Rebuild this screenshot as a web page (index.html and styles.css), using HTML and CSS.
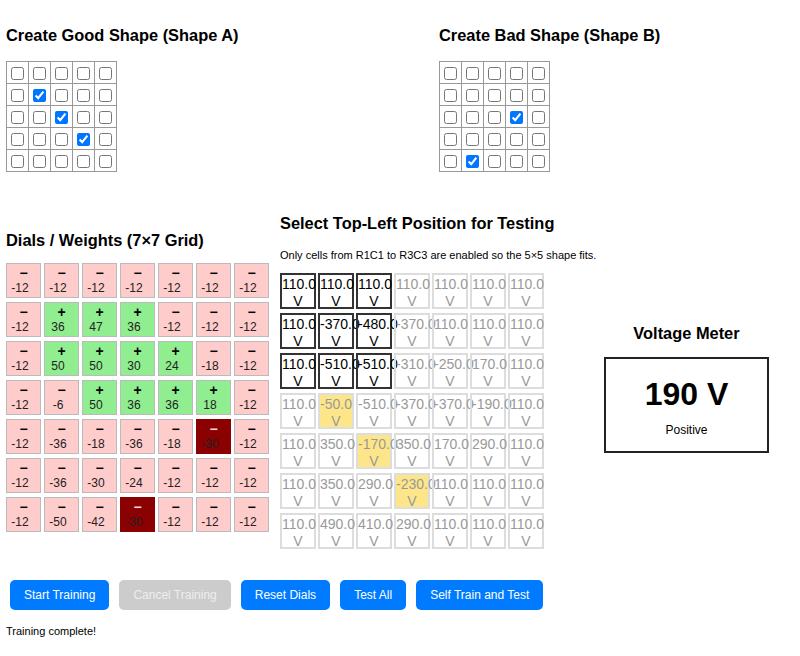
FILE: index.html
```html
<!DOCTYPE html>
<html lang="en">
<head>
  <meta charset="UTF-8">
  <title>Shape Trainer</title>
  <meta name="viewport" content="width=device-width, initial-scale=1.0">
  <link rel="stylesheet" href="styles.css">
</head>
<body>

  <!-- Shapes to learn -->
  <div class="shapes">
    <section class="shape-panel good">
      <h3>Create Good Shape (Shape A)</h3>
      <table class="shape-grid" id="shapeA"></table>
    </section>
    <section class="shape-panel">
      <h3>Create Bad Shape (Shape B)</h3>
      <table class="shape-grid" id="shapeB"></table>
    </section>
  </div>

  <div class="workspace">
    <section class="dials-panel">
      <h3>Dials / Weights (7×7 Grid)</h3>
      <div class="dial-grid" id="dials"></div>
    </section>

    <section class="test-panel">
      <h3>Select Top-Left Position for Testing</h3>
      <p class="hint">Only cells from R1C1 to R3C3 are enabled so the 5×5 shape fits.</p>
      <div class="test-grid" id="testGrid"></div>
    </section>

    <section class="meter-panel">
      <h3>Voltage Meter</h3>
      <div class="meter">
        <div class="meter-value">190 V</div>
        <div class="meter-label">Positive</div>
      </div>
    </section>
  </div>

  <div class="controls">
    <button class="btn">Start Training</button>
    <button class="btn" disabled>Cancel Training</button>
    <button class="btn">Reset Dials</button>
    <button class="btn">Test All</button>
    <button class="btn">Self Train and Test</button>
  </div>
  <div class="status">Training complete!</div>

  <script>
    // Shapes (row, col) that are ticked
    const shapeA = ["1,1", "2,2", "3,3"];
    const shapeB = ["2,3", "4,1"];

    function buildShape(id, ticked) {
      const table = document.getElementById(id);
      for (let r = 0; r < 5; r++) {
        const tr = document.createElement("tr");
        for (let c = 0; c < 5; c++) {
          const td = document.createElement("td");
          const box = document.createElement("input");
          box.type = "checkbox";
          box.checked = ticked.includes(r + "," + c);
          td.appendChild(box);
          tr.appendChild(td);
        }
        table.appendChild(tr);
      }
    }
    buildShape("shapeA", shapeA);
    buildShape("shapeB", shapeB);

    // Dials / weights
    const weights = [
      [-12, -12, -12, -12, -12, -12, -12],
      [-12, 36, 47, 36, -12, -12, -12],
      [-12, 50, 50, 30, 24, -18, -12],
      [-12, -6, 50, 36, 36, 18, -12],
      [-12, -36, -18, -36, -18, -30, -12],
      [-12, -36, -30, -24, -12, -12, -12],
      [-12, -50, -42, -30, -12, -12, -12]
    ];
    const burnt = ["4,5", "6,3"];

    const dials = document.getElementById("dials");
    weights.forEach((row, r) => {
      row.forEach((w, c) => {
        const cell = document.createElement("div");
        cell.className = "dial " + (w > 0 ? "pos" : "neg");
        if (burnt.includes(r + "," + c)) cell.classList.add("burnt");
        cell.innerHTML = '<span class="sign">' + (w > 0 ? "+" : "−") + '</span><span class="num">' + w + '</span>';
        dials.appendChild(cell);
      });
    });

    // Test voltages
    const volts = [
      [110, 110, 110, 110, 110, 110, 110],
      [110, -370, -480, -370, 110, 110, 110],
      [110, -510, -510, -310, -250, 170, 110],
      [110, -50, -510, -370, -370, -190, 110],
      [110, 350, -170, 350, 170, 290, 110],
      [110, 350, 290, -230, 110, 110, 110],
      [110, 490, 410, 290, 110, 110, 110]
    ];
    const marked = ["3,1", "4,2", "5,3"];

    const testGrid = document.getElementById("testGrid");
    volts.forEach((row, r) => {
      row.forEach((v, c) => {
        const cell = document.createElement("div");
        cell.className = "test-cell";
        if (r < 3 && c < 3) cell.classList.add("enabled");
        if (marked.includes(r + "," + c)) cell.classList.add("marked");
        cell.innerHTML = v.toFixed(1) + "<br>V";
        testGrid.appendChild(cell);
      });
    });
  </script>
</body>
</html>
```

FILE: styles.css
```css
body {
  font-family: "Liberation Sans", Arial, sans-serif;
  margin: 0;
  padding: 0 6px;
  background-color: #fff;
  color: #000;
}

h3 {
  font-size: 16.4px;
  font-weight: bold;
  margin: 0;
}

/* Shapes */
.shapes {
  display: flex;
  padding-top: 26px;
}

.shape-panel.good {
  width: 433px;
}

.shape-panel h3 {
  margin-bottom: 16px;
}

.shape-grid {
  border-collapse: collapse;
}

.shape-grid td {
  border: 1px solid #999;
  width: 21px;
  height: 21px;
  padding: 0;
  text-align: center;
  vertical-align: middle;
}

.shape-grid input {
  margin: 0;
  width: 13px;
  height: 13px;
  vertical-align: middle;
}

/* Dials, test grid, meter */
.workspace {
  display: flex;
  align-items: center;
  margin-top: 42px;
}

.dials-panel h3 {
  margin-bottom: 13px;
}

.dial-grid {
  display: grid;
  grid-template-columns: repeat(7, 35px);
  grid-auto-rows: 35px;
  column-gap: 3px;
  row-gap: 4px;
}

.dial {
  box-sizing: border-box;
  border: 1px solid #bbb;
  display: flex;
  flex-direction: column;
  align-items: center;
  padding-top: 2px;
}

.dial.neg {
  background-color: #ffcccc;
}

.dial.pos {
  background-color: #90ee90;
}

.dial.burnt {
  background-color: #8b0000;
  border-color: #8b0000;
}

.dial .sign {
  font-weight: bold;
  font-size: 14px;
  line-height: 14px;
}

.dial.burnt .sign {
  color: #f4dcdc;
}

.dial .num {
  font-size: 12px;
  line-height: 16px;
  padding-right: 7px;
  color: #222;
}

.test-panel {
  margin-left: 11px;
  width: 310px;
}

.test-panel h3 {
  margin-bottom: 16px;
}

.hint {
  font-size: 11px;
  white-space: nowrap;
  margin: 0 0 12px;
}

.test-grid {
  display: grid;
  grid-template-columns: repeat(7, 36px);
  grid-auto-rows: 36px;
  column-gap: 2px;
  row-gap: 4px;
}

.test-cell {
  box-sizing: border-box;
  border: 2px solid #ddd;
  padding-top: 1px;
  font-size: 14px;
  line-height: 17px;
  text-align: center;
  color: #999;
  white-space: nowrap;
}

.test-cell.enabled {
  border-color: #333;
  color: #000;
}

.test-cell.marked {
  background-color: #fde68a;
}

.meter-panel {
  margin-left: 14px;
  padding-top: 13px;
  text-align: center;
}

.meter-panel h3 {
  margin-bottom: 14px;
}

.meter {
  box-sizing: border-box;
  width: 165px;
  height: 96px;
  border: 2px solid #222;
  padding-top: 17px;
}

.meter-value {
  font-size: 32px;
  font-weight: bold;
}

.meter-label {
  font-size: 12px;
  margin-top: 10px;
}

/* Buttons */
.controls {
  display: flex;
  gap: 10px;
  padding-left: 4px;
  margin-top: 31px;
}

.btn {
  font-family: "Liberation Sans", Arial, sans-serif;
  font-size: 12px;
  line-height: 14px;
  background-color: #007bff;
  color: #fff;
  border: none;
  padding: 8px 14px;
  border-radius: 5px;
  cursor: pointer;
}

.btn:disabled {
  background-color: #ccc;
  color: #eee;
  cursor: default;
}

.status {
  font-size: 11px;
  margin-top: 15px;
}
```
